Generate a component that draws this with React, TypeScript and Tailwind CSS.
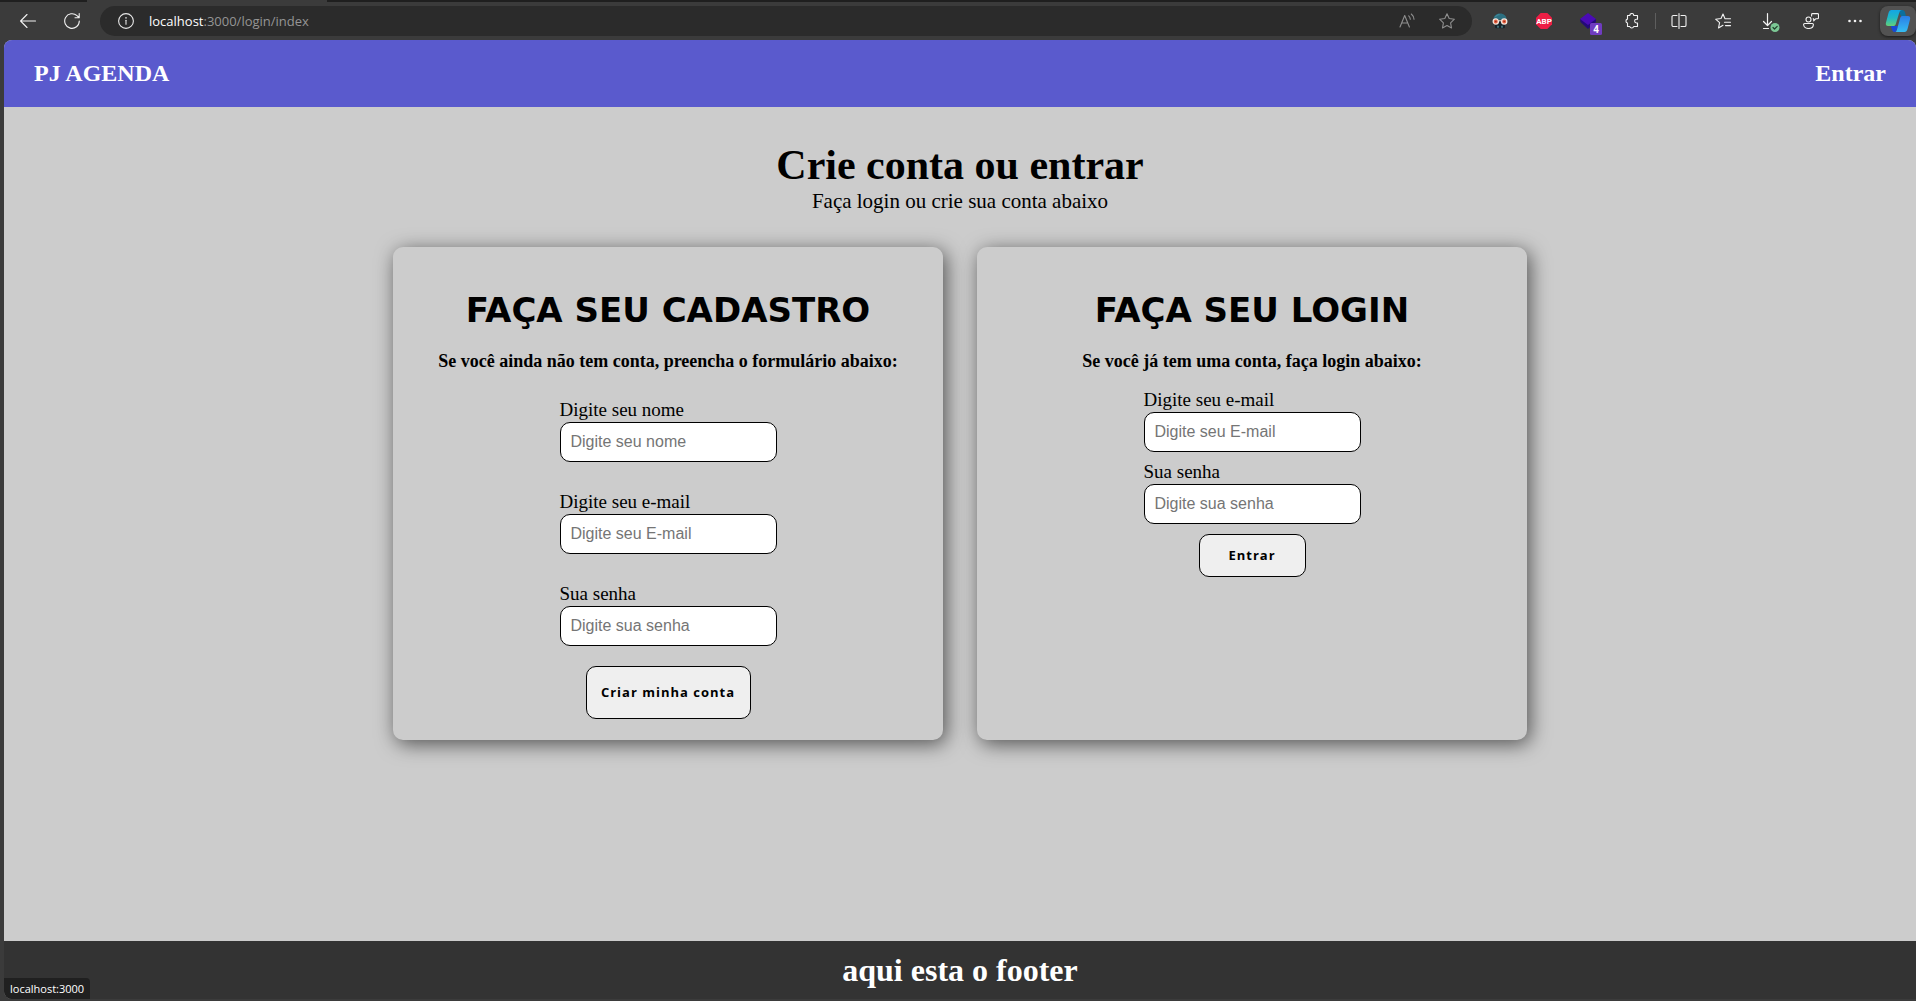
import type { ReactNode } from "react";

function ToolButton({ label, children }: { label: string; children: ReactNode }) {
  return (
    <button type="button" aria-label={label} className="flex h-8 w-11 shrink-0 items-center justify-center text-[#f2f2f2]">
      {children}
    </button>
  );
}

function Line({ size = 16, children }: { size?: number; children: ReactNode }) {
  return (
    <svg width={size} height={size} viewBox="0 0 16 16" fill="none" stroke="currentColor" strokeWidth="1.1" strokeLinecap="round" strokeLinejoin="round">
      {children}
    </svg>
  );
}

function BrowserBar() {
  return (
    <div className="bg-[#3b3b3b]">
      <div className="flex h-0.5 bg-[#1f1f1f]">
        <div className="ml-[87px] w-60 bg-[#3b3b3b]" />
      </div>
      <div className="flex h-[38px] items-center pl-1.5">
        <ToolButton label="Voltar">
          <Line>
            <path d="M15.5 8H.8M7 1.5.6 8 7 14.5" />
          </Line>
        </ToolButton>
        <ToolButton label="Atualizar">
          <Line>
            <path d="M15.3 8A7.3 7.3 0 1 1 13 2.7L15 4.7M15.2.6v4.2h-4.2" />
          </Line>
        </ToolButton>
        <div className="ml-1.5 flex h-[30px] flex-1 items-center rounded-full bg-[#2b2b2b] pl-[18px] pr-[17px]">
          <span className="text-[#e8e8e8]">
            <Line>
              <circle cx="8" cy="8" r="7.4" />
              <path d="M8 7.3v4" />
              <path d="M8 4.8v.1" strokeWidth="1.5" />
            </Line>
          </span>
          <span className="ml-[15px] flex-1 font-['Open_Sans',sans-serif] text-[13px] leading-5 text-[#959595]">
            <span className="text-white">localhost</span>:3000/login/index
          </span>
          <button type="button" aria-label="Ler em voz alta" className="mr-6 text-[#8f8f8f]">
            <Line>
              <path d="M1 14 5.7 2.5 10.4 14M2.7 10h6M9.7 2.8c1 .9 1.5 2 1.6 3.4M12.3 1c1.6 1.3 2.5 3 2.7 5.2" />
            </Line>
          </button>
          <button type="button" aria-label="Favoritar" className="text-[#8f8f8f]">
            <Line>
              <path d="m8 .8 2.2 4.7 5.2.7-3.8 3.6.9 5.2L8 12.500 3.500 15l.9-5.200L.6 6.200l5.200-.7z" />
            </Line>
          </button>
        </div>
        <div className="ml-1.5 flex items-center">
          <ToolButton label="Extensão com óculos">
            <svg width="16" height="16" viewBox="0 0 16 16">
              <path d="M1.500 6.500C1.500 3 4 .5 8 .5s6.500 2.500 6.500 6z" fill="#2c6f80" />
              <path d="M3.500 3.800C4.500 2.300 6 1.700 7.500 1.700" stroke="#4b93a3" fill="none" />
              <path d="M3 8h10v6.500l-1 .7H4l-1-.7z" fill="#16242b" />
              <circle cx="3.800" cy="8.500" r="2.600" fill="#e8613f" stroke="#f3e6dd" strokeWidth="1.300" />
              <circle cx="12.200" cy="8.500" r="2.600" fill="#e8613f" stroke="#f3e6dd" strokeWidth="1.300" />
              <circle cx="3.800" cy="8.500" r=".8" fill="#8f2a20" />
              <circle cx="12.200" cy="8.500" r=".8" fill="#8f2a20" />
              <path d="M6.500 7.800h3" stroke="#f3e6dd" />
              <path d="M5.500 12.800h1v2h-1zM9.500 12.800h1v2h-1z" fill="#6db3bd" />
            </svg>
          </ToolButton>
          <ToolButton label="Adblock Plus">
            <svg width="16" height="16" viewBox="0 0 16 16">
              <path d="M4.700 0h6.600L16 4.700v6.600L11.300 16H4.700L0 11.300V4.700z" fill="#ed1e45" />
              <text x="8" y="11" textAnchor="middle" fontSize="8" fontWeight="700" fill="#fff" fontFamily="Roboto, sans-serif">ABP</text>
            </svg>
          </ToolButton>
          <ToolButton label="Extensão com 4 itens">
            <svg width="28" height="28" viewBox="0 0 28 28">
              <path d="M6.500 15 14 22l8-7v-3H6z" fill="#240a78" />
              <path d="M14 6l8 6-8 6-8-6z" fill="#4a0bb5" />
              <rect x="16" y="16" width="12" height="12" rx="1.500" fill="#6f3cc0" />
              <text x="22" y="26" textAnchor="middle" fontSize="10" fontWeight="700" fill="#fff" fontFamily="Roboto, sans-serif">4</text>
            </svg>
          </ToolButton>
          <ToolButton label="Extensões">
            <Line>
              <path d="M3.500 2.500h2.300a2 2 0 0 1 4 0h3.700v3.700h-1a1.900 1.900 0 0 0 0 3.800h1v3.500H9.700a2 2 0 0 1-3.900 0H3.500V10a2 2 0 0 1 0-3.900z" />
            </Line>
          </ToolButton>
          <span className="mx-px h-4 w-px bg-[#5e5e5e]" />
          <ToolButton label="Dividir tela">
            <Line>
              <path d="M6 2.500H2.300A1.300 1.300 0 0 0 1 3.800v8.400a1.300 1.300 0 0 0 1.300 1.300H6M10 2.500h3.700A1.300 1.300 0 0 1 15 3.800v8.400a1.300 1.300 0 0 1-1.300 1.300H10M8 .6v14.800" />
            </Line>
          </ToolButton>
          <ToolButton label="Favoritos">
            <Line>
              <path d="M10 5.800 8 1 6 5.500l-5.400.7 4 3.500L3.500 15 8 12.300M10 5.800h5.500M9.500 9.200h6M10.500 12.600h5" />
            </Line>
          </ToolButton>
          <ToolButton label="Downloads">
            <svg width="26" height="26" viewBox="0 0 26 26" fill="none" stroke="currentColor" strokeWidth="1.200" strokeLinecap="round" strokeLinejoin="round">
              <path d="M13.500 5.500v12M9.500 13.500l4 4 4-4M9.500 20.500h5" />
              <circle cx="21" cy="19.500" r="4.500" fill="#7cc795" stroke="none" />
              <path d="m19 19.500 1.500 1.500 2.700-2.700" stroke="#20402a" />
            </svg>
          </ToolButton>
          <ToolButton label="Compartilhar">
            <Line>
              <circle cx="5.500" cy="6.500" r="2.500" />
              <path d="M1.600 10.500h7.800a1 1 0 0 1 1 1c0 2.400-2 4-4.900 4s-4.900-1.600-4.900-4a1 1 0 0 1 1-1zM9.500.6h5a1 1 0 0 1 1 1v3.200a1 1 0 0 1-1 1h-1.800l-2 2v-2h-.5M8.600 3V1.500a.9.9 0 0 1 .9-.9" />
            </Line>
          </ToolButton>
          <ToolButton label="Mais opções">
            <svg width="16" height="16" viewBox="0 0 16 16" fill="currentColor">
              <circle cx="2.500" cy="8" r="1.300" />
              <circle cx="8" cy="8" r="1.300" />
              <circle cx="13.500" cy="8" r="1.300" />
            </svg>
          </ToolButton>
          <button type="button" aria-label="Copilot" className="ml-[3px] flex h-[30px] w-9 items-center justify-center rounded-lg bg-[#525252] shadow-[0_1px_3px_#1a1a1a]">
            <svg width="26" height="24" viewBox="0 0 26 24">
              <defs>
                <linearGradient id="cpA" x1="0" y1="0" x2="0" y2="1">
                  <stop offset="0" stopColor="#13a5e4" />
                  <stop offset=".5" stopColor="#20b8c4" />
                  <stop offset="1" stopColor="#63d07a" />
                </linearGradient>
                <linearGradient id="cpB" x1="0" y1="0" x2="0" y2="1">
                  <stop offset="0" stopColor="#2b7de6" />
                  <stop offset="1" stopColor="#35bdf2" />
                </linearGradient>
              </defs>
              <path d="M13 1h4c2 0 2.600 1 3.100 2.800l.9 3.200h-5z" fill="#0b6f9d" />
              <path d="M6 17h7l-1.500 4.500c-.5 1.200-1.100 1.500-2 1.500C7.500 23 7 21 6 17z" fill="#1849d6" />
              <path d="M6.500 1H17c-1.600 0-2.200 1-2.700 2.600L10.800 15c-.5 1.500-1.300 2-2.500 2H3.200C1 17 .4 15.500 1 13.400L3.500 4C4.100 2 4.900 1 6.500 1z" fill="url(#cpA)" />
              <path d="M17.700 7h5.100c2.200 0 2.800 1.500 2.200 3.600L22.500 20c-.6 2-1.400 3-3 3H9.500c1.600 0 2-1 2.500-2.600L15.200 9c.5-1.500 1.300-2 2.500-2z" fill="url(#cpB)" />
            </svg>
          </button>
        </div>
      </div>
    </div>
  );
}

function Field({ id, label, placeholder, type = "text" }: { id: string; label: string; placeholder: string; type?: string }) {
  return (
    <div className="flex w-[217px] flex-col">
      <label htmlFor={id} className="pb-0.5 text-[19px] leading-5">
        {label}
      </label>
      <input
        id={id}
        type={type}
        placeholder={placeholder}
        className="h-10 w-full rounded-[10px] border border-black bg-white px-2.5 font-['Liberation_Sans',Arial,sans-serif] text-base placeholder:text-[#757575]"
      />
    </div>
  );
}

function Card({ title, subtitle, children }: { title: string; subtitle: string; children: ReactNode }) {
  return (
    <section className="flex w-[550px] flex-col items-center rounded-[10px] bg-[#ccc] px-5 pt-10 pb-[21px] shadow-[3px_4px_20px_rgba(0,0,0,0.6)]">
      <h2 className="font-['DejaVu_Sans',Verdana,sans-serif] text-[34px] leading-[46px] font-bold">{title}</h2>
      <p className="mt-4 text-lg leading-6 font-bold whitespace-nowrap">{subtitle}</p>
      {children}
    </section>
  );
}

const buttonText = "rounded-[10px] border border-black bg-[#efefef] font-['Open_Sans',sans-serif] text-[13px] font-bold tracking-[1px]";

export default function App() {
  return (
    <div className="flex min-h-screen flex-col bg-[#3b3b3b] font-['Liberation_Serif','Times_New_Roman',serif] text-black">
      <BrowserBar />
      <div className="relative mb-0.5 ml-1 flex flex-1 flex-col overflow-hidden rounded-t-lg rounded-bl-lg bg-[#ccc]">
        <header className="flex h-[67px] items-center justify-between bg-[#5a5acd] px-[30px] pb-0.5 text-2xl font-bold text-white">
          <a href="#inicio">PJ AGENDA</a>
          <a href="#entrar">Entrar</a>
        </header>
        <main className="flex flex-1 flex-col items-center pt-[34px]">
          <h1 className="text-[42px] leading-12 font-bold">Crie conta ou entrar</h1>
          <p className="text-[21px] leading-6">Faça login ou crie sua conta abaixo</p>
          <div className="mt-[34px] flex flex-wrap justify-center gap-[34px]">
            <Card title="FAÇA SEU CADASTRO" subtitle="Se você ainda não tem conta, preencha o formulário abaixo:">
              <form className="mt-[27px] flex flex-col items-center gap-[30px]">
                <Field id="cadastro-nome" label="Digite seu nome" placeholder="Digite seu nome" />
                <Field id="cadastro-email" label="Digite seu e-mail" placeholder="Digite seu E-mail" type="email" />
                <Field id="cadastro-senha" label="Sua senha" placeholder="Digite sua senha" type="password" />
                <button type="button" className={`${buttonText} -mt-2.5 h-[53px] w-[165px]`}>
                  Criar minha conta
                </button>
              </form>
            </Card>
            <Card title="FAÇA SEU LOGIN" subtitle="Se você já tem uma conta, faça login abaixo:">
              <form className="mt-[17px] flex flex-col items-center gap-2.5">
                <Field id="login-email" label="Digite seu e-mail" placeholder="Digite seu E-mail" type="email" />
                <Field id="login-senha" label="Sua senha" placeholder="Digite sua senha" type="password" />
                <button type="button" className={`${buttonText} h-[43px] w-[107px]`}>
                  Entrar
                </button>
              </form>
            </Card>
          </div>
        </main>
        <footer className="flex h-[58px] items-center justify-center bg-[#333] text-[32px] font-bold text-white">
          aqui esta o footer
        </footer>
        <div className="absolute bottom-0 left-0 rounded-tr-sm bg-[#202020] px-1.5 font-['Open_Sans',sans-serif] text-[11px] leading-[21px] text-white">
          localhost:3000
        </div>
      </div>
    </div>
  );
}
